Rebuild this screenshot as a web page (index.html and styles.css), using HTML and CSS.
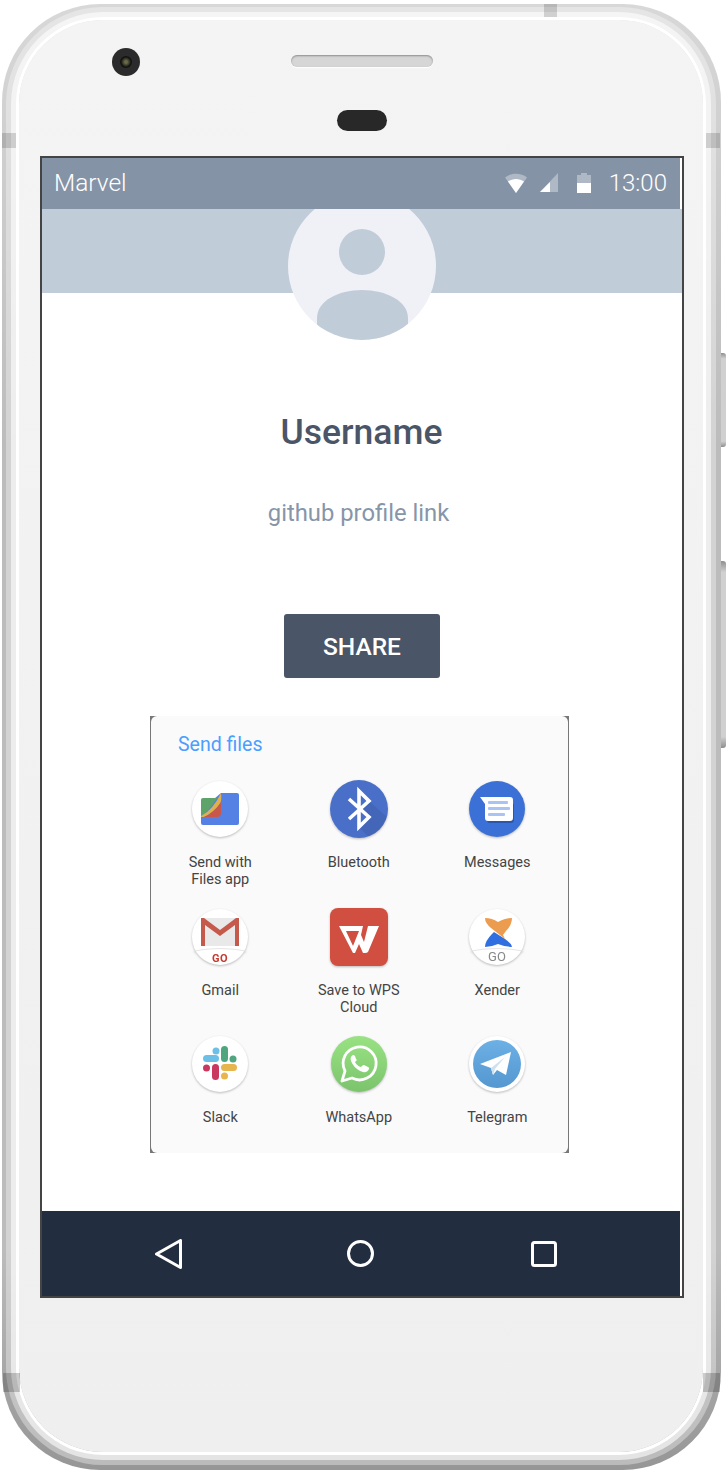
FILE: index.html
```html
<!DOCTYPE html>
<html lang="en">
<head>
    <meta charset="UTF-8">
    <meta name="viewport" content="width=device-width, initial-scale=1.0">
    <title>Profile</title>
    <link rel="stylesheet" href="styles.css">
</head>
<body>
    <div class="phone">
        <div class="phone-face">
            <span class="camera"><span class="lens"></span></span>
            <div class="speaker"></div>
            <div class="sensor"></div>

            <div class="screen">
                <div class="status-bar">
                    <span class="status-title">Marvel</span>
                    <svg class="status-wifi" width="22" height="20" viewBox="0 0 22 20">
                        <path d="M0 4.500C6 -0.500 16 -0.500 22 4.500L11 20Z" fill="#fff" fill-opacity=".35"/>
                        <path d="M3 8.500C7.500 5 14.500 5 19 8.500L11 20Z" fill="#fff"/>
                    </svg>
                    <svg class="status-signal" width="18" height="19" viewBox="0 0 18 19">
                        <path d="M18 0V19H0Z" fill="#fff" fill-opacity=".35"/>
                        <path d="M10 9V19H0Z" fill="#fff"/>
                    </svg>
                    <svg class="status-battery" width="14" height="20" viewBox="0 0 14 20">
                        <path d="M4 0H10V2H14V20H0V2H4Z" fill="#fff" fill-opacity=".35"/>
                        <rect y="10" width="14" height="10" fill="#fff"/>
                    </svg>
                    <span class="status-time">13:00</span>
                </div>

                <div class="cover">
                    <svg class="avatar" width="148" height="148" viewBox="0 0 148 148">
                        <defs>
                            <clipPath id="avatar-clip"><circle cx="74" cy="74" r="74"/></clipPath>
                        </defs>
                        <g clip-path="url(#avatar-clip)">
                            <rect width="148" height="148" fill="#eff1f7"/>
                            <circle cx="74" cy="60" r="23" fill="#c1ccd9"/>
                            <path d="M29 148V126C29 109 50 98 74 98S120 109 120 126V148Z" fill="#c1ccd9"/>
                        </g>
                    </svg>
                </div>

                <div class="profile">
                    <h1 class="username">Username</h1>
                    <p class="profile-link">github profile link</p>
                    <button class="share-btn">SHARE</button>

                    <div class="sheet">
                        <div class="sheet-body">
                            <div class="sheet-title">Send files</div>
                            <div class="app-grid">
                                <div class="app">
                                    <svg class="app-icon" viewBox="0 0 58 58">
                                        <circle cx="29" cy="29" r="28" fill="#fff"/>
                                        <path d="M10 30L30 13H46Q48 13 48 15V43Q48 45 46 45H12Q10 45 10 43Z" fill="#5481e3"/>
                                        <path d="M10 36V20Q10 18 12 18H26Q19 30 10 36Z" fill="#5ea36a"/>
                                        <path d="M10 36Q22 30 30 13Q31 20 29 24Q22 33 13 37H10Z" fill="#e0b04a"/>
                                        <path d="M13 37Q23 33 30 22V33Q30 37 26 37Z" fill="#c9574a"/>
                                    </svg>
                                    <div class="app-name">Send with<br>Files app</div>
                                </div>
                                <div class="app">
                                    <svg class="app-icon" viewBox="0 0 58 58">
                                        <circle cx="29" cy="29" r="29" fill="#4a6fc9"/>
                                        <path d="M39 21L57 37A29 29 0 0 1 38 56.600L29 47L39 37L33 29Z" fill="#000" fill-opacity=".08"/>
                                        <path d="M19 19L39 37L29 47V11L39 21L19 39" fill="none" stroke="#fff" stroke-width="3.600"/>
                                    </svg>
                                    <div class="app-name">Bluetooth</div>
                                </div>
                                <div class="app">
                                    <svg class="app-icon" viewBox="0 0 58 58">
                                        <circle cx="29" cy="29" r="28" fill="#3b71d6"/>
                                        <path d="M18 25L19 40Q19 43 22 43H43Q46 43 46 40V24Z" fill="#2a56ad"/>
                                        <path d="M12 17H42Q45 17 45 20V38Q45 41 42 41H20Q17 41 17 38V24Z" fill="#fff"/>
                                        <rect x="20" y="21" width="20" height="3" rx="1" fill="#a9c3f3"/>
                                        <rect x="20" y="27" width="22" height="3" rx="1" fill="#a9c3f3"/>
                                        <rect x="20" y="33" width="17" height="3" rx="1" fill="#a9c3f3"/>
                                    </svg>
                                    <div class="app-name">Messages</div>
                                </div>
                                <div class="app">
                                    <svg class="app-icon" viewBox="0 0 58 58">
                                        <circle cx="29" cy="29" r="28" fill="#fff"/>
                                        <rect x="10" y="10" width="38" height="28" fill="#e9e9e9"/>
                                        <path d="M10 38V10H13L29 22L45 10H48V38H44V17L29 28L14 17V38Z" fill="#c5594c"/>
                                        <path d="M3 43Q29 38 55 43" fill="none" stroke="#e6e6e6"/>
                                        <text class="go-text go-red" x="29" y="54">GO</text>
                                    </svg>
                                    <div class="app-name">Gmail</div>
                                </div>
                                <div class="app">
                                    <svg class="app-icon" viewBox="0 0 58 58">
                                        <rect width="58" height="58" rx="8" fill="#d04f41"/>
                                        <path d="M9 18H49L38 44Q37 45 35 45H33L29 36L25 45H23Z" fill="#fff"/>
                                        <path d="M16 23H29L23 38Z" fill="#d04f41"/>
                                        <path d="M33 18H38L34 34L31 27Z" fill="#d04f41"/>
                                    </svg>
                                    <div class="app-name">Save to WPS<br>Cloud</div>
                                </div>
                                <div class="app">
                                    <svg class="app-icon" viewBox="0 0 58 58">
                                        <circle cx="29" cy="29" r="28" fill="#fff"/>
                                        <path d="M26 24L37 31Q44 36 44 39Q37 39 30 36Q23 39 17 39Q17 33 24 26Z" fill="#2f6fe0"/>
                                        <path d="M17 10Q24 10 30 14Q37 10 44 10Q44 17 38 23L35 27L37 31L23 20Q17 15 17 10Z" fill="#ec9c4f"/>
                                        <path d="M3 43Q29 38 55 43" fill="none" stroke="#e6e6e6"/>
                                        <text class="go-text go-grey" x="29" y="52.500">GO</text>
                                    </svg>
                                    <div class="app-name">Xender</div>
                                </div>
                                <div class="app">
                                    <svg class="app-icon" viewBox="0 0 58 58">
                                        <circle cx="29" cy="29" r="28" fill="#fff"/>
                                        <rect x="12" y="20" width="16" height="7" rx="3.500" fill="#6cc0e8"/>
                                        <circle cx="25" cy="16" r="3.500" fill="#6cc0e8"/>
                                        <rect x="30" y="11" width="7" height="16" rx="3.500" fill="#4fa67e"/>
                                        <circle cx="42" cy="24" r="3.500" fill="#4fa67e"/>
                                        <rect x="21" y="29" width="7" height="16" rx="3.500" fill="#c9395f"/>
                                        <circle cx="15.500" cy="33" r="3.500" fill="#c9395f"/>
                                        <rect x="30" y="29" width="16" height="7" rx="3.500" fill="#e6b54e"/>
                                        <circle cx="33.500" cy="41" r="3.500" fill="#e6b54e"/>
                                    </svg>
                                    <div class="app-name">Slack</div>
                                </div>
                                <div class="app">
                                    <svg class="app-icon" viewBox="0 0 58 58">
                                        <defs>
                                            <linearGradient id="wa-green" x1="0" y1="0" x2="0" y2="1">
                                                <stop offset="0" stop-color="#98e283"/>
                                                <stop offset="1" stop-color="#7cc46c"/>
                                            </linearGradient>
                                            <linearGradient id="tg-blue" x1="0" y1="0" x2="0" y2="1">
                                                <stop offset="0" stop-color="#6cb0e6"/>
                                                <stop offset="1" stop-color="#5597cf"/>
                                            </linearGradient>
                                        </defs>
                                        <circle cx="29" cy="29" r="28" fill="url(#wa-green)"/>
                                        <path d="M12 46L15 36A16.500 16.500 0 1 1 22 43Z" fill="none" stroke="#fff" stroke-width="2.800" stroke-linejoin="round"/>
                                        <path d="M23 20C21 21 20 23 21 26C23 31 27 35 33 37C36 38 38 36 39 34C39 33 39 32 38 32L34 30C33 30 33 30 32 31L31 32C29 32 26 29 25 27L26 26C27 25 27 25 26 24L25 21C24 20 24 20 23 20Z" fill="#fff"/>
                                    </svg>
                                    <div class="app-name">WhatsApp</div>
                                </div>
                                <div class="app">
                                    <svg class="app-icon" viewBox="0 0 58 58">
                                        <circle cx="29" cy="29" r="28" fill="#fff"/>
                                        <circle cx="29" cy="29" r="24" fill="url(#tg-blue)"/>
                                        <path d="M12 29L43 17L38 40L29 35L25 40L23 33Z" fill="#fff"/>
                                        <path d="M23 33L37 22L27 34L25 40Z" fill="#cfe0ee"/>
                                    </svg>
                                    <div class="app-name">Telegram</div>
                                </div>
                            </div>
                        </div>
                    </div>
                </div>

                <div class="nav-bar">
                    <svg class="nav-back" width="27" height="30" viewBox="0 0 27 30">
                        <path d="M25.500 1.500V28.500L1.500 15Z" fill="none" stroke="#fff" stroke-width="3" stroke-linejoin="round"/>
                    </svg>
                    <svg class="nav-home" width="27" height="27" viewBox="0 0 27 27">
                        <circle cx="13.500" cy="13.500" r="12" fill="none" stroke="#fff" stroke-width="3"/>
                    </svg>
                    <svg class="nav-recent" width="26" height="26" viewBox="0 0 26 26">
                        <rect x="1.500" y="1.500" width="23" height="23" rx="2" fill="none" stroke="#fff" stroke-width="3"/>
                    </svg>
                </div>
            </div>
        </div>

        <!-- side buttons and antenna bands sit on the frame -->
        <span class="side-btn side-btn-power"></span>
        <span class="side-btn side-btn-volume"></span>
        <span class="band band-top"></span>
        <span class="band band-left"></span>
        <span class="band band-right"></span>
        <span class="band band-bottom-left"></span>
        <span class="band band-bottom-right"></span>
    </div>
</body>
</html>
```

FILE: styles.css
```css
/* page and phone frame */
body {
    margin: 0;
    background: #fff;
    font-family: Roboto, "Liberation Sans", sans-serif;
}
.phone {
    position: relative;
    width: 719px;
    height: 1466px;
    margin: 4px 0 0 2px;
    padding: 16px 18px 18px 17px;
    box-sizing: border-box;
    border-radius: 98px;
    background: linear-gradient(to bottom, #d8d8d8, #bcbcbc 30%, #bcbcbc 85%, #969696);
}
.phone-face {
    position: relative;
    height: 100%;
    padding-top: 35px;
    box-sizing: border-box;
    border-radius: 84px;
    background: linear-gradient(to bottom, #f4f4f4, #efefef);
    box-shadow: 0 0 0 3px #fff, 0 0 0 8px rgba(255,255,255,0.6), 0 0 0 13px rgba(255,255,255,0.35);
}
.side-btn {
    position: absolute;
    right: -5px;
    width: 5px;
    border-radius: 0 3px 3px 0;
    background: linear-gradient(to bottom, #8f8f8f, #d0d0d0 6%, #d0d0d0 94%, #8f8f8f);
}
.side-btn-power {
    top: 349px;
    height: 94px;
}
.side-btn-volume {
    top: 557px;
    height: 187px;
}
.band {
    position: absolute;
    background: rgba(0,0,0,0.15);
}
.band-top {
    top: 0;
    left: 542px;
    width: 13px;
    height: 13px;
}
.band-left, .band-right {
    top: 129px;
    width: 14px;
    height: 15px;
}
.band-left { left: 0; }
.band-right { right: 1px; }
.band-bottom-left, .band-bottom-right {
    top: 1369px;
    width: 17px;
    height: 19px;
    background: rgba(0,0,0,0.2);
}
.band-bottom-left { left: 1px; }
.band-bottom-right { right: 1px; }

/* top bezel */
.camera {
    position: absolute;
    top: 28px;
    left: 93px;
    width: 28px;
    height: 28px;
    border-radius: 50%;
    background: #2b2b2b;
}
.lens {
    display: block;
    width: 12px;
    height: 12px;
    margin: 8px;
    border-radius: 50%;
    background: radial-gradient(circle, #6a6a4a 15%, #111 60%);
}
.speaker {
    width: 142px;
    height: 12px;
    margin-left: 272px;
    border-radius: 6px;
    background: #d6d6d6;
    box-shadow: inset 0 1px 2px rgba(0,0,0,0.35), 0 1px 1px #fff;
}
.sensor {
    width: 50px;
    height: 21px;
    margin: 43px 0 25px 318px;
    border-radius: 11px;
    background: #282828;
}

/* screen */
.screen {
    position: relative;
    display: flex;
    flex-direction: column;
    width: 644px;
    height: 1142px;
    margin-left: 21px;
    box-sizing: border-box;
    border: 2px solid #444;
    background: #fff;
    overflow: hidden;
}
.status-bar {
    position: relative;
    z-index: 2;
    display: flex;
    align-items: center;
    flex: none;
    height: 51px;
    margin-right: 2px;
    padding: 0 13px 2px;
    box-sizing: border-box;
    background: #8593a7;
    color: #fff;
    font-size: 24px;
    font-weight: 300;
}
.status-title {
    margin-right: auto;
    margin-left: -1px;
    font-size: 24.500px;
}
.status-signal {
    margin-left: 13px;
}
.status-battery {
    margin-left: 19px;
}
.status-time {
    margin-left: 18px;
}
.cover {
    position: relative;
    flex: none;
    height: 84px;
    background: #c1ccd9;
}
.avatar {
    position: absolute;
    top: -17px;
    left: 246px;
}

/* profile */
.profile {
    display: flex;
    flex-direction: column;
    align-items: center;
}
.username {
    margin: 119px 1px 0 0;
    color: #4a5568;
    font-size: 35.500px;
    font-weight: 500;
    line-height: 40px;
}
.profile-link {
    margin: 46px 7px 0 0;
    color: #8795a9;
    font-size: 23.800px;
    line-height: 30px;
}
.share-btn {
    width: 156px;
    height: 64px;
    margin-top: 86px;
    border: none;
    border-radius: 3px;
    background: #4a5568;
    color: #fff;
    font-family: inherit;
    font-size: 24.500px;
    font-weight: 500;
}

/* share sheet */
.sheet {
    align-self: flex-start;
    width: 419px;
    height: 437px;
    margin: 38px 0 0 108px;
    padding: 0 1px;
    box-sizing: border-box;
    background: #777;
}
.sheet-body {
    height: 100%;
    padding-top: 17px;
    box-sizing: border-box;
    border-radius: 6px;
    background: #fafafa;
}
.sheet-title {
    padding-left: 27px;
    color: #4a9eff;
    font-size: 19.500px;
    line-height: 24px;
}
.app-grid {
    display: grid;
    grid-template-columns: repeat(3, 138.500px);
    grid-template-rows: 128px 127px 127px;
    margin-top: 23px;
}
.app {
    display: flex;
    flex-direction: column;
    align-items: center;
}
.app-icon {
    flex: none;
    width: 58px;
    height: 58px;
    filter: drop-shadow(0 1px 1px rgba(0,0,0,0.25));
}
.app-name {
    margin-top: 16px;
    color: #444;
    font-size: 14.500px;
    line-height: 17px;
    text-align: center;
}
.go-text {
    font-family: Roboto, sans-serif;
    text-anchor: middle;
}
.go-red {
    fill: #c5392f;
    font-size: 11px;
    font-weight: 700;
    letter-spacing: 0.5px;
}
.go-grey {
    fill: #888;
    font-size: 13px;
}

/* nav bar */
.nav-bar {
    display: flex;
    align-items: center;
    flex: none;
    height: 85px;
    margin-top: auto;
    margin-right: 2px;
    padding-left: 113px;
    background: #222e3f;
}
.nav-home {
    margin-left: 165px;
}
.nav-recent {
    margin-left: 157px;
}
```
